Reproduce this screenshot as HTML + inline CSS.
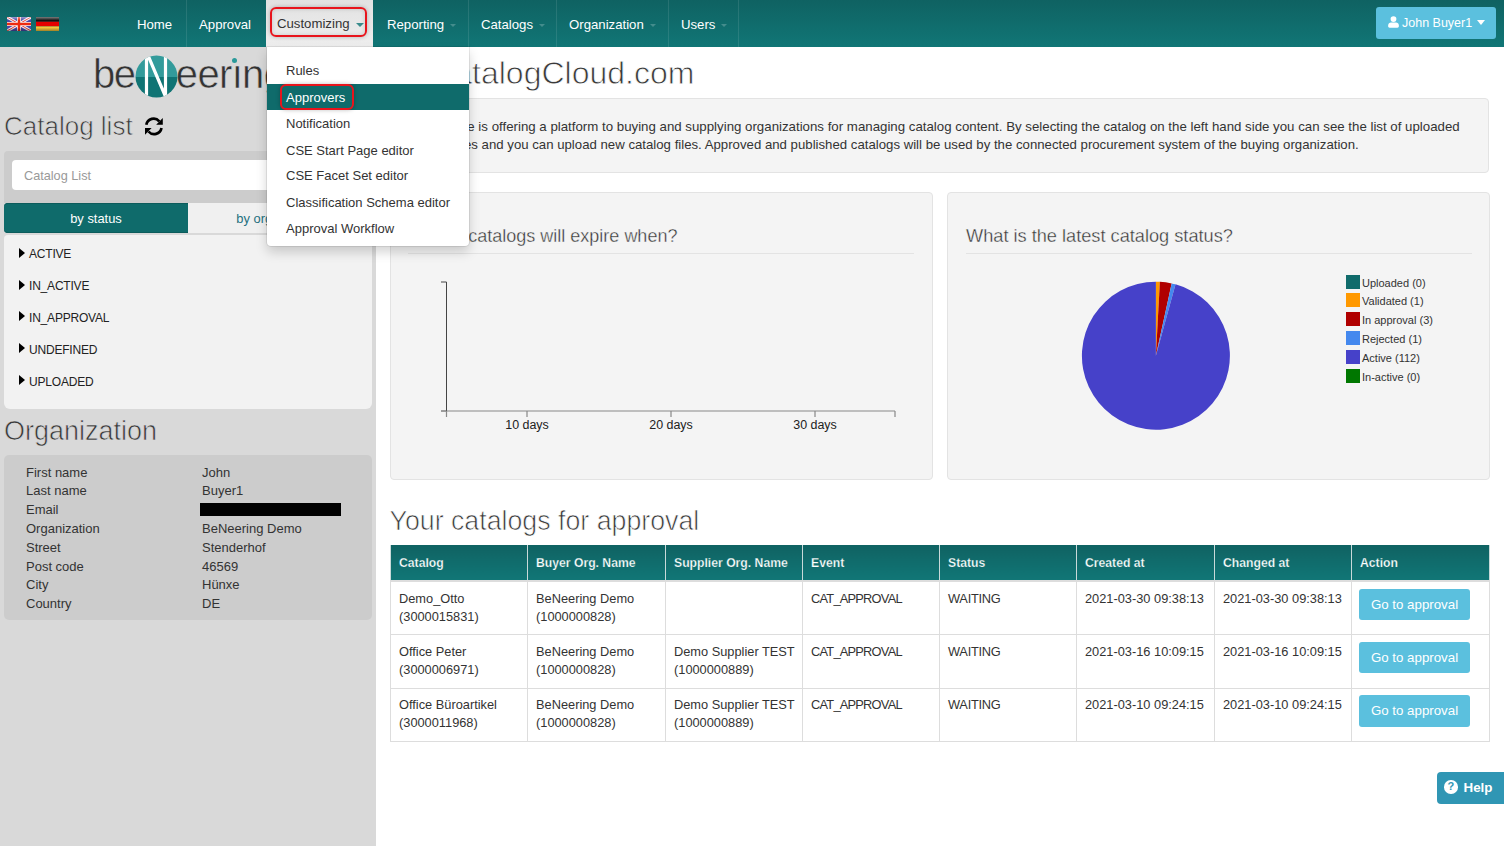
<!DOCTYPE html>
<html><head><meta charset="utf-8">
<style>
*{box-sizing:border-box;margin:0;padding:0}
html,body{width:1504px;height:846px;overflow:hidden;background:#fff;font-family:"Liberation Sans",sans-serif;color:#333;position:relative}
.abs{position:absolute}
.nw{white-space:nowrap}
#nav{left:0;top:0;width:1504px;height:47px;background:linear-gradient(to bottom,#0f6262,#117676);}
.ni{position:absolute;top:0.5px;height:47px;color:#fff;font-size:13.2px;line-height:47px;white-space:nowrap}
.sep{position:absolute;top:0;width:1px;height:47px;background:rgba(255,255,255,0.10)}
.caret{display:inline-block;width:0;height:0;border-left:3.5px solid transparent;border-right:3.5px solid transparent;border-top:3.5px solid rgba(255,255,255,0.22);vertical-align:middle;margin-left:6px}
#side{left:0;top:47px;width:376px;height:799px;background:#d9d9d9}
.tl{position:absolute;left:29px;font-size:12px;line-height:20px;color:#222;white-space:nowrap;letter-spacing:-0.2px}
.tri{position:absolute;left:19px;width:0;height:0;border-top:5.5px solid transparent;border-bottom:5.5px solid transparent;border-left:6px solid #000}
.org{font-size:13px;line-height:18.76px;color:#333;white-space:nowrap}
.welltxt{font-size:13.17px;line-height:18px;color:#333;white-space:nowrap}
.panel{background:#f4f4f4;border:1px solid #e3e3e3;border-radius:4px}
.ptitle{font-size:18px;line-height:28px;color:#333;-webkit-text-stroke:0.35px #f4f4f4;white-space:nowrap}
.axl{width:80px;text-align:center;font-size:12.45px;line-height:16px;color:#222}
.lg{height:18.88px;font-size:11px;line-height:14px;color:#333;white-space:nowrap}
.lg i{display:inline-block;width:14px;height:14px;vertical-align:top;margin-right:2px}
.lg span{position:relative;top:1px}
#tbl{border-collapse:collapse;table-layout:fixed;width:1099px}
#tbl th{background:linear-gradient(to bottom,#0f6262,#117676);color:#fff;font-weight:bold;-webkit-text-stroke:0.25px #107070;font-size:12.2px;text-align:left;height:36px;padding:0 8px 0;border-bottom:2px solid #dddddd;border-left:1px solid #c9d9d9;border-right:1px solid #c9d9d9;white-space:nowrap}
#tbl td{height:53.5px;vertical-align:top;font-size:12.8px;line-height:18px;padding:7.7px 8px 0 8px;border:1px solid #dddddd;color:#333;white-space:nowrap}
.btn{display:inline-block;background:#5bc0de;color:#fff;border-radius:3px;width:111px;height:32px;line-height:32px;text-align:center;font-size:13.3px;margin-top:-1px;margin-left:-1px;height:31.5px;line-height:31.5px}
#tbl td.cp{letter-spacing:-0.25px}
.ddi{position:absolute;left:19px;font-size:13px;line-height:26px;color:#333;white-space:nowrap}
.hd1{font-size:26.75px;line-height:34px;color:#3a3a3a;-webkit-text-stroke:0.7px #fff;white-space:nowrap}
</style></head><body>
<div id="nav" class="abs">
  <svg class="abs" style="left:7px;top:17px" width="24" height="14" viewBox="0 0 24 14">
    <rect width="24" height="14" fill="#4a48a8"/>
    <path d="M0 0L24 14M24 0L0 14" stroke="#f2eef2" stroke-width="3"/>
    <path d="M0 0L24 14M24 0L0 14" stroke="#e8403a" stroke-width="1"/>
    <path d="M12 0V14M0 7H24" stroke="#f5f0f0" stroke-width="4"/>
    <path d="M12 0V14M0 7H24" stroke="#ee2a10" stroke-width="2.4"/>
    <defs><linearGradient id="gl" x1="0" y1="0" x2="0" y2="1"><stop offset="0" stop-color="#fff" stop-opacity=".45"/><stop offset=".25" stop-color="#fff" stop-opacity="0"/><stop offset=".75" stop-color="#000" stop-opacity="0"/><stop offset="1" stop-color="#000" stop-opacity=".35"/></linearGradient></defs>
    <rect width="24" height="14" fill="url(#gl)"/>
  </svg>
  <svg class="abs" style="left:36px;top:17px" width="23" height="14" viewBox="0 0 23 14">
    <rect width="23" height="4.7" fill="#111"/>
    <rect y="4.7" width="23" height="4.7" fill="#e40000"/>
    <rect y="9.4" width="23" height="4.6" fill="#f5c53a"/>
    <rect width="23" height="14" fill="url(#gl)"/>
  </svg>
  <div class="ni" style="left:137px">Home</div>
  <div class="sep" style="left:186px"></div>
  <div class="ni" style="left:199px">Approval</div>
  <div class="abs" style="left:266px;top:0;width:107px;height:47px;background:linear-gradient(to bottom,#e2e2e2,#eeeeee)"></div>
  <div class="ni" style="left:277px;top:0.4px;color:#333">Customizing<span class="caret" style="border-top-color:#3a8c8c;border-left-width:4px;border-right-width:4px;border-top-width:4.5px;vertical-align:1px"></span></div>
  <div class="abs" style="left:270px;top:6.6px;width:97px;height:30.4px;border:2.2px solid #e8141c;border-radius:6px;box-shadow:0 0 4px rgba(0,0,0,.25),inset 0 0 4px rgba(0,0,0,.15)"></div>
  <div class="ni" style="left:387px">Reporting<span class="caret"></span></div>
  <div class="sep" style="left:468px"></div>
  <div class="ni" style="left:481px">Catalogs<span class="caret"></span></div>
  <div class="sep" style="left:556px"></div>
  <div class="ni" style="left:569px">Organization<span class="caret"></span></div>
  <div class="sep" style="left:668px"></div>
  <div class="ni" style="left:681px">Users<span class="caret"></span></div>
  <div class="sep" style="left:738px"></div>
  <div class="abs" style="left:1376px;top:6.5px;width:120px;height:32px;background:#5bc0de;border-radius:3px"></div>
  <svg class="abs" style="left:1388px;top:16.3px" width="11" height="11.8" viewBox="0 0 11 12" preserveAspectRatio="none"><circle cx="5.5" cy="3.1" r="2.9" fill="#fff"/><path d="M0.2 10.5V9.3C0.2 7.6 1.5 6.6 3 6.6H8C9.5 6.6 10.8 7.6 10.8 9.3V10.5Q10.8 12 9.5 12H1.5Q0.2 12 0.2 10.5Z" fill="#fff"/></svg>
  <div class="abs nw" style="left:1402px;top:8.3px;font-size:12.5px;line-height:31px;color:#fff">John Buyer1</div>
  <div class="abs" style="left:1477px;top:20px;width:0;height:0;border-left:4.5px solid transparent;border-right:4.5px solid transparent;border-top:5px solid #fff"></div>
</div>
<div id="side" class="abs">
  <div class="abs nw" style="left:93px;top:3.5px;font-size:40px;line-height:46px;color:#333;letter-spacing:-1.5px;-webkit-text-stroke:0.55px #d9d9d9">be<span style="display:inline-block;width:41.3px"></span><span style="letter-spacing:-0.65px">eer&#305;ng</span></div>
  <div class="abs" style="left:231.6px;top:10.5px;width:5.2px;height:5.2px;border-radius:50%;background:#2a9a9a"></div>
  <svg class="abs" style="left:135px;top:8px" width="43" height="43" viewBox="0 0 43 43">
    <defs><clipPath id="cc"><circle cx="21.5" cy="21.5" r="21"/></clipPath></defs>
    <g clip-path="url(#cc)">
      <rect width="43" height="22" fill="#339b9b"/>
      <rect y="22" width="43" height="22" fill="#107474"/>
      <path d="M11.5 44V1.5h2l17 40V-1" fill="none" stroke="#fff" stroke-width="3.2"/>
    </g>
  </svg>
  <div class="abs nw" style="left:4px;top:60.5px;font-size:26px;line-height:36px;color:#3a3a3a;-webkit-text-stroke:0.7px #d9d9d9">Catalog list</div>
  <svg class="abs" style="left:138px;top:63px" width="32" height="32" viewBox="0 0 32 32">
    <path d="M8.3 14.75A7.45 7.45 0 0 1 21.3 11.3M23.5 18.05A7.45 7.45 0 0 1 10.5 21.5" fill="none" stroke="#000" stroke-width="2.7"/>
    <path d="M24.8 8.1V14.75H18.15ZM7.0 24.7V18.05H13.65Z" fill="#000"/>
  </svg>
  <div class="abs" style="left:4px;top:104px;width:368px;height:52px;background:#cccccc;border-radius:4px 4px 0 0"></div>
  <div class="abs nw" style="left:12px;top:113px;width:360px;height:30px;background:#fff;border-radius:4px 0 0 4px;font-size:12.7px;line-height:30px;color:#999;padding-left:12px;padding-top:1px">Catalog List</div>
  <div class="abs nw" style="left:4px;top:156px;width:184px;height:30px;background:#0f6b6b;color:#fff;font-size:12.9px;line-height:30px;text-align:center;border-radius:4px 0 0 4px;padding-top:1px;box-shadow:inset 0 1px 0 #0c5c5c,inset 0 -1px 0 #0c5c5c">by status</div>
  <div class="abs nw" style="left:188px;top:156px;width:184px;height:30px;background:#f0f0f0;color:#25707f;font-size:12.9px;line-height:30px;text-align:center;padding-top:1px">by organization</div>
  <div class="abs" style="left:4px;top:188px;width:368px;height:174px;background:#f2f2f2;border-radius:4px 0 6px 6px"></div>
  <div class="tri" style="top:200.5px"></div><div class="tl" style="top:197px">ACTIVE</div>
  <div class="tri" style="top:232.5px"></div><div class="tl" style="top:229px">IN_ACTIVE</div>
  <div class="tri" style="top:264px"></div><div class="tl" style="top:260.5px">IN_APPROVAL</div>
  <div class="tri" style="top:296px"></div><div class="tl" style="top:292.5px">UNDEFINED</div>
  <div class="tri" style="top:328px"></div><div class="tl" style="top:324.5px">UPLOADED</div>
  <div class="abs hd1" style="left:4px;top:367.3px;font-size:27px;color:#3a3a3a;-webkit-text-stroke:0.7px #d9d9d9">Organization</div>
  <div class="abs" style="left:4px;top:408px;width:368px;height:165px;background:#cccccc;border-radius:5px"></div>
  <div class="abs org" style="top:416.7px;left:26px">First name<br>Last name<br>Email<br>Organization<br>Street<br>Post code<br>City<br>Country</div>
  <div class="abs org" style="top:416.7px;left:202px">John<br>Buyer1<br><br>BeNeering Demo<br>Stenderhof<br>46569<br>Hünxe<br>DE</div>
  <div class="abs" style="left:200px;top:456px;width:141px;height:13px;background:#000"></div>
</div>
<div id="main">
  <div class="abs nw" style="left:431.15px;top:52.5px;font-size:32px;line-height:40px;color:#3a3a3a;-webkit-text-stroke:0.8px #fff" id="hdw">CatalogCloud.com</div>
  <div class="abs" style="left:390px;top:98px;width:1099px;height:75px;background:#f4f4f4;border:1px solid #e3e3e3;border-radius:4px"></div>
  <div class="abs welltxt" style="left:425.3px;top:118.2px;font-size:13.28px">This site is offering a platform to buying and supplying organizations for managing catalog content. By selecting the catalog on the left hand side you can see the list of uploaded</div>
  <div class="abs welltxt" style="left:408.2px;top:136.2px;font-size:13.21px">catalog files and you can upload new catalog files. Approved and published catalogs will be used by the connected procurement system of the buying organization.</div>

  <div class="abs panel" style="left:390px;top:192px;width:543px;height:288px"></div>
  <div class="abs ptitle" style="left:413.3px;top:222px">Which catalogs will expire when?</div>
  <div class="abs" style="left:408px;top:253px;width:506px;height:1px;background:#e3e3e3"></div>
  <svg class="abs" style="left:430px;top:270px" width="480" height="170">
    <path d="M11 12H16.5V141H11" fill="none" stroke="#444" stroke-width="1"/>
    <path d="M16.5 141H465M16.5 141V147M97 141V147M241 141V147M385 141V147M465 141V147" fill="none" stroke="#888" stroke-width="1.2"/>
  </svg>
  <div class="abs axl" style="left:487px;top:417px">10 days</div>
  <div class="abs axl" style="left:631px;top:417px">20 days</div>
  <div class="abs axl" style="left:775px;top:417px">30 days</div>

  <div class="abs panel" style="left:947px;top:192px;width:543px;height:288px"></div>
  <div class="abs ptitle" style="left:966px;top:222px;font-size:18.2px">What is the latest catalog status?</div>
  <div class="abs" style="left:966px;top:253px;width:506px;height:1px;background:#e3e3e3"></div>
  <svg class="abs" style="left:1070px;top:270px" width="180" height="170"><path d="M85.9 85.7L85.90 11.70A74 74 0 0 1 89.87 11.81Z" fill="#ff9900"/><path d="M85.9 85.7L89.87 11.81A74 74 0 0 1 101.67 13.40Z" fill="#b00000"/><path d="M85.9 85.7L101.67 13.40A74 74 0 0 1 105.53 14.35Z" fill="#4488ee"/><path d="M85.9 85.7L105.53 14.35A74 74 0 1 1 85.90 11.70Z" fill="#4641c9"/></svg>
  <div class="abs" style="left:1346px;top:274.5px">
    <div class="lg"><i style="background:#106b6b"></i><span>Uploaded (0)</span></div>
    <div class="lg"><i style="background:#ff9900"></i><span>Validated (1)</span></div>
    <div class="lg"><i style="background:#b00000"></i><span>In approval (3)</span></div>
    <div class="lg"><i style="background:#4488ee"></i><span>Rejected (1)</span></div>
    <div class="lg"><i style="background:#4641c9"></i><span>Active (112)</span></div>
    <div class="lg"><i style="background:#007700"></i><span>In-active (0)</span></div>
  </div>

  <div class="abs hd1" style="left:389.5px;top:504px">Your catalogs for approval</div>
  <table class="abs" id="tbl" style="left:390px;top:545px">
    <tr><th style="width:137px">Catalog</th><th style="width:138px">Buyer Org. Name</th><th style="width:137px">Supplier Org. Name</th><th style="width:137px">Event</th><th style="width:137px">Status</th><th style="width:138px">Created at</th><th style="width:137px">Changed at</th><th style="width:138px">Action</th></tr>
    <tr><td>Demo_Otto<br>(3000015831)</td><td>BeNeering Demo<br>(1000000828)</td><td></td><td class="cp" style="letter-spacing:-0.75px">CAT_APPROVAL</td><td class="cp">WAITING</td><td>2021-03-30 09:38:13</td><td>2021-03-30 09:38:13</td><td><span class="btn">Go to approval</span></td></tr>
    <tr><td>Office Peter<br>(3000006971)</td><td>BeNeering Demo<br>(1000000828)</td><td>Demo Supplier TEST<br>(1000000889)</td><td class="cp" style="letter-spacing:-0.75px">CAT_APPROVAL</td><td class="cp">WAITING</td><td>2021-03-16 10:09:15</td><td>2021-03-16 10:09:15</td><td><span class="btn">Go to approval</span></td></tr>
    <tr><td>Office Büroartikel<br>(3000011968)</td><td>BeNeering Demo<br>(1000000828)</td><td>Demo Supplier TEST<br>(1000000889)</td><td class="cp" style="letter-spacing:-0.75px">CAT_APPROVAL</td><td class="cp">WAITING</td><td>2021-03-10 09:24:15</td><td>2021-03-10 09:24:15</td><td><span class="btn">Go to approval</span></td></tr>
  </table>
  <div class="abs" style="left:1437px;top:772px;width:70px;height:32px;background:#3096b4;border-radius:4px"></div>
  <div class="abs" style="left:1444px;top:780px;width:13.6px;height:13.6px;border-radius:50%;background:#fff"></div>
  <div class="abs nw" style="left:1444px;top:780px;width:13.6px;text-align:center;font-size:11px;line-height:13.6px;font-weight:bold;color:#3096b4">?</div>
  <div class="abs nw" style="left:1463.5px;top:773px;font-weight:bold;font-size:13.4px;line-height:30px;color:#fff">Help</div>
</div>
<div id="dd" class="abs" style="left:267px;top:47px;width:202px;height:199px;background:#fff;border-radius:0 0 4px 4px;box-shadow:0 6px 12px rgba(0,0,0,.175),0 0 0 1px rgba(0,0,0,.08)">
  <div class="ddi" style="top:11.1px">Rules</div>
  <div class="abs" style="left:0;top:37px;width:202px;height:26px;background:#0f6b6b"></div>
  <div class="ddi" style="top:37.7px;color:#fff">Approvers</div>
  <div class="abs" style="left:13px;top:37px;width:74px;height:26px;border:2.2px solid #e8141c;border-radius:6px;box-shadow:0 0 4px rgba(0,0,0,.25)"></div>
  <div class="ddi" style="top:64.2px">Notification</div>
  <div class="ddi" style="top:90.6px">CSE Start Page editor</div>
  <div class="ddi" style="top:116.1px">CSE Facet Set editor</div>
  <div class="ddi" style="top:143.1px">Classification Schema editor</div>
  <div class="ddi" style="top:169.1px">Approval Workflow</div>
</div>
</body></html>
